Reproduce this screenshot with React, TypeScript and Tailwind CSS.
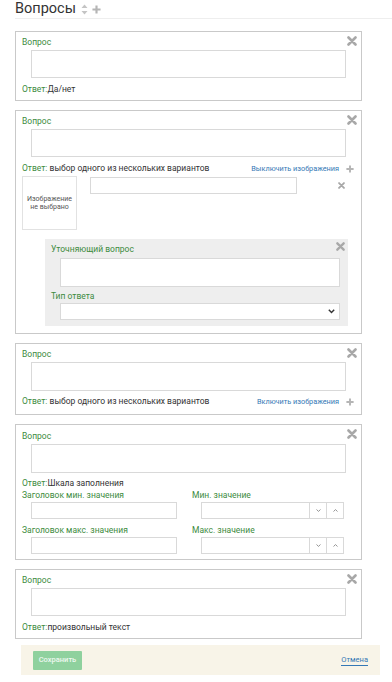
import React from 'react';

const font = { fontFamily: 'Roboto, "Liberation Sans", sans-serif' };

const CloseIcon = ({ size = 10 }: { size?: number }) => (
  <svg width={size} height={size} viewBox="0 0 10 10">
    <path d="M1.5 1.5 L8.5 8.5 M8.5 1.5 L1.5 8.5" stroke="#a8a8a8" strokeWidth="2.6" strokeLinecap="round" />
  </svg>
);

const PlusIcon = ({ size = 9 }: { size?: number }) => (
  <svg width={size} height={size} viewBox="0 0 10 10">
    <path d="M5 0.5 V9.5 M0.5 5 H9.5" stroke="#b5b5b5" strokeWidth="2.4" />
  </svg>
);

const SortIcon = () => (
  <svg width="7" height="11" viewBox="0 0 7 11">
    <path d="M3.5 0.5 L6.5 4 H0.5 Z M3.5 10.5 L6.5 7 H0.5 Z" fill="#c4c4c4" />
  </svg>
);

const Chevron = ({ up = false }: { up?: boolean }) => (
  <svg width="5" height="3" viewBox="0 0 5 3">
    <path d={up ? 'M0.5 2.5 L2.5 0.6 L4.5 2.5' : 'M0.5 0.5 L2.5 2.4 L4.5 0.5'} stroke="#888" strokeWidth="0.9" fill="none" />
  </svg>
);

const Label = ({ children, className = '' }: { children: React.ReactNode; className?: string }) => (
  <div className={`text-[8.5px] leading-[11px] text-[#3d8b3d] ${className}`}>{children}</div>
);

const Textarea = ({ className = '' }: { className?: string }) => (
  <div className={`h-[28px] border border-[#d9d9d9] bg-white ${className}`} />
);

const Card = ({ children, className = '' }: { children: React.ReactNode; className?: string }) => (
  <div className={`relative ml-[15px] w-[347px] border border-[#c9c9c9] bg-white pl-[6px] pr-[6px] ${className}`}>
    <div className="absolute right-[4px] top-[4px]">
      <CloseIcon />
    </div>
    {children}
  </div>
);

const Answer = ({ value, spaced = false }: { value: string; spaced?: boolean }) => (
  <div className="text-[8.5px] leading-[11px] text-[#333]">
    <span className="text-[#3d8b3d]">Ответ:</span>
    {spaced ? ' ' : ''}
    {value}
  </div>
);

const SpinInput = () => (
  <div className="ml-[9px] flex h-[17px] w-[143px]">
    <div className="h-full flex-1 border border-[#d9d9d9]" />
    <div className="flex h-full w-[17px] items-center justify-center border border-l-0 border-[#d9d9d9]">
      <Chevron />
    </div>
    <div className="flex h-full w-[17px] items-center justify-center border border-l-0 border-[#d9d9d9]">
      <Chevron up />
    </div>
  </div>
);

export default function App() {
  return (
    <div className="min-h-[682px] w-[392px] bg-white pb-[5px]" style={font}>
      {/* Header */}
      <div className="ml-[15px] flex h-[19px] items-center gap-[5px] border-b border-[#eeeeee] pb-[1px]">
        <span className="text-[14.5px] leading-[17px] text-[#333]">Вопросы</span>
        <span className="mt-[2px] flex items-center gap-[4px]">
          <SortIcon />
          <PlusIcon size={9} />
        </span>
      </div>

      {/* Yes / no */}
      <Card className="mt-[12px] pb-[5px] pt-[5px]">
        <Label>Вопрос</Label>
        <Textarea className="ml-[9px] mr-[9px] mt-[2px]" />
        <div className="mt-[6px]">
          <Answer value="Да/нет" />
        </div>
      </Card>

      {/* One of several, images on */}
      <Card className="mt-[9px] pb-[7px] pt-[5px]">
        <Label>Вопрос</Label>
        <Textarea className="ml-[9px] mr-[9px] mt-[2px]" />
        <div className="mt-[6px] flex items-center justify-between">
          <Answer value="выбор одного из нескольких вариантов" spaced />
          <div className="flex items-center gap-[7px] pr-[1px]">
            <span className="text-[7.3px] leading-[11px] text-[#3478b5]">Выключить изображения</span>
            <PlusIcon size={8} />
          </div>
        </div>
        <div className="mt-[2px] flex items-start">
          <div className="flex h-[54px] w-[55px] items-center justify-center border border-[#e2e2e2] text-center text-[7px] leading-[8px] text-[#555]">
            Изображение
            <br />
            не выбрано
          </div>
          <div className="ml-[13px] mt-[1px] h-[17px] w-[207px] border border-[#d9d9d9]" />
          <div className="ml-[41px] mt-[6px]">
            <CloseIcon size={7} />
          </div>
        </div>
        <div className="relative ml-[23px] mr-[7px] mt-[9px] bg-[#eeeeee] pb-[6px] pl-[6px] pr-[8px] pt-[5px]">
          <div className="absolute right-[3px] top-[3px]">
            <CloseIcon size={9} />
          </div>
          <Label>Уточняющий вопрос</Label>
          <Textarea className="ml-[9px] mt-[3px] h-[29px]" />
          <Label className="mt-[4px]">Тип ответа</Label>
          <div className="ml-[9px] mt-[1px] flex h-[17px] items-center justify-end border border-[#d9d9d9] bg-white pr-[4px]">
            <svg width="7" height="5" viewBox="0 0 7 5">
              <path d="M0.8 0.8 L3.5 3.6 L6.2 0.8" stroke="#333" strokeWidth="1.4" fill="none" />
            </svg>
          </div>
        </div>
      </Card>

      {/* One of several, images off */}
      <Card className="mt-[9px] pb-[7px] pt-[5px]">
        <Label>Вопрос</Label>
        <Textarea className="ml-[9px] mr-[9px] mt-[2px] h-[29px]" />
        <div className="mt-[5px] flex items-center justify-between">
          <Answer value="выбор одного из нескольких вариантов" spaced />
          <div className="flex items-center gap-[7px] pr-[1px]">
            <span className="text-[7.3px] leading-[11px] text-[#3478b5]">Включить изображения</span>
            <PlusIcon size={8} />
          </div>
        </div>
      </Card>

      {/* Scale */}
      <Card className="mt-[9px] pb-[5px] pt-[6px]">
        <Label>Вопрос</Label>
        <Textarea className="ml-[9px] mr-[9px] mt-[2px] h-[29px]" />
        <div className="mt-[5px]">
          <Answer value="Шкала заполнения" />
        </div>
        <div className="mt-[1px] grid grid-cols-[170px_1fr]">
          <div>
            <Label>Заголовок мин. значения</Label>
            <div className="ml-[9px] mt-[1px] h-[17px] w-[146px] border border-[#d9d9d9]" />
          </div>
          <div>
            <Label>Мин. значение</Label>
            <div className="mt-[1px]">
              <SpinInput />
            </div>
          </div>
          <div className="mt-[6px]">
            <Label>Заголовок макс. значения</Label>
            <div className="ml-[9px] mt-[1px] h-[17px] w-[146px] border border-[#d9d9d9]" />
          </div>
          <div className="mt-[6px]">
            <Label>Макс. значение</Label>
            <div className="mt-[1px]">
              <SpinInput />
            </div>
          </div>
        </div>
      </Card>

      {/* Free text */}
      <Card className="mt-[9px] pb-[5px] pt-[5px]">
        <Label>Вопрос</Label>
        <Textarea className="ml-[9px] mr-[9px] mt-[2px]" />
        <div className="mt-[6px]">
          <Answer value="произвольный текст" />
        </div>
      </Card>

      {/* Footer */}
      <div className="ml-[21px] mt-[6px] flex h-[30px] w-[359px] items-center justify-between bg-[#f8f4e8] pl-[12px] pr-[12px]">
        <div className="flex h-[19px] w-[49px] items-center justify-center rounded-[1px] bg-[#8fd19e] text-[7.5px] font-medium text-[#eef8f0]">
          Сохранить
        </div>
        <span className="border-b border-[#3478b5] text-[7.5px] leading-[10px] text-[#3478b5]">Отмена</span>
      </div>
    </div>
  );
}
